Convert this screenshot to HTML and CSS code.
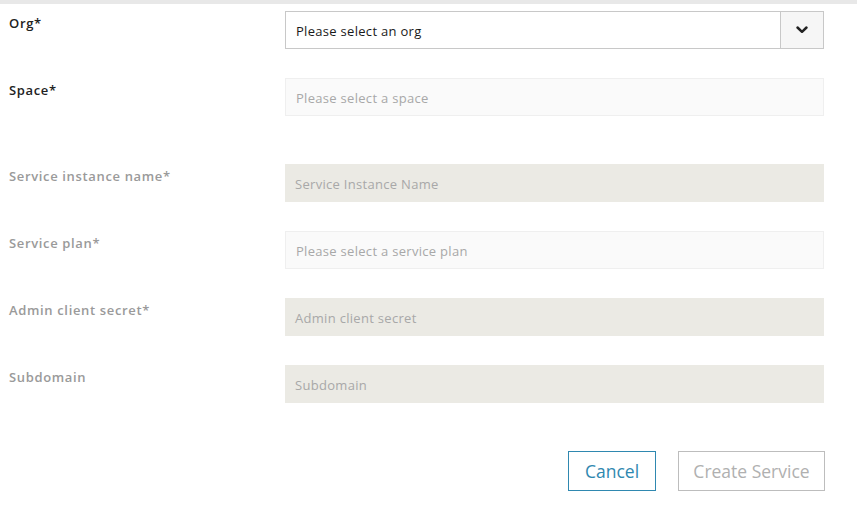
FILE: index.html
```html
<!DOCTYPE html>
<html>
<head>
<meta charset="utf-8">
<link rel="stylesheet" href="styles.css">
</head>
<body>
<div class="topbar"></div>
<form class="form">
  <div class="row">
    <label class="label label-active">Org*</label>
    <div class="field select">
      <span class="value">Please select an org</span>
      <span class="caret">
        <svg width="14" height="10" viewBox="0 0 14 10"><path d="M2.5 2.5 L7 6.8 L11.5 2.5" fill="none" stroke="#222" stroke-width="2.5" stroke-linecap="round" stroke-linejoin="round"/></svg>
      </span>
    </div>
  </div>
  <div class="row">
    <label class="label label-active">Space*</label>
    <div class="field light"><span class="ph">Please select a space</span></div>
  </div>
  <div class="row row-gap">
    <label class="label">Service instance name*</label>
    <div class="field dim"><span class="ph">Service Instance Name</span></div>
  </div>
  <div class="row">
    <label class="label">Service plan*</label>
    <div class="field light"><span class="ph">Please select a service plan</span></div>
  </div>
  <div class="row">
    <label class="label">Admin client secret*</label>
    <div class="field dim"><span class="ph">Admin client secret</span></div>
  </div>
  <div class="row">
    <label class="label">Subdomain</label>
    <div class="field dim"><span class="ph">Subdomain</span></div>
  </div>
  <div class="actions">
    <button type="button" class="btn btn-cancel">Cancel</button>
    <button type="button" class="btn btn-create">Create Service</button>
  </div>
</form>
</body>
</html>
```
FILE: styles.css
```css
html, body {
  margin: 0;
  padding: 0;
  background: #fff;
  font-family: "Open Sans", "Noto Sans", sans-serif;
}
.topbar {
  height: 4px;
  background: #e8e8e8;
}
.form {
  display: flex;
  flex-direction: column;
  gap: 29px;
  padding: 7px 33px 0 9px;
}
.row {
  display: flex;
  align-items: flex-start;
}
.row-gap {
  margin-top: 19px;
}
.label {
  width: 276px;
  flex: none;
  font-size: 13px;
  font-weight: 600;
  line-height: 18px;
  padding-top: 3px;
  color: #9a9a9a;
  letter-spacing: 0.65px;
}
.label-active {
  color: #222;
}
.field {
  flex: 1;
  height: 38px;
  box-sizing: border-box;
  display: flex;
  align-items: center;
  padding-left: 10px;
  padding-top: 1px;
  font-size: 13px;
  letter-spacing: 0.3px;
}
.select {
  border: 1px solid #c8c8c8;
  background: #fff;
  padding-right: 0;
  padding-top: 0;
}
.select .value {
  flex: 1;
  color: #1a1a1a;
  padding-top: 1px;
}
.caret {
  width: 42px;
  height: 100%;
  border-left: 1px solid #c8c8c8;
  background: #f6f6f6;
  display: flex;
  align-items: center;
  justify-content: center;
}
.light {
  background: #fafafa;
  border: 1px solid #efefef;
}
.dim {
  background: #ebeae4;
}
.ph {
  color: #a8a8a8;
}
.actions {
  display: flex;
  justify-content: flex-end;
  gap: 22px;
  margin-top: 19px;
}
.btn {
  height: 40px;
  font-family: "Open Sans", "Noto Sans", sans-serif;
  font-size: 17.5px;
  background: #fff;
  padding: 0;
  cursor: pointer;
}
.btn-cancel {
  width: 88px;
  border: 1px solid #2f88b0;
  color: #2f88b0;
}
.btn-create {
  width: 147px;
  border: 1px solid #bdbdbd;
  color: #b0b0b0;
  margin-right: -1px;
}
```
